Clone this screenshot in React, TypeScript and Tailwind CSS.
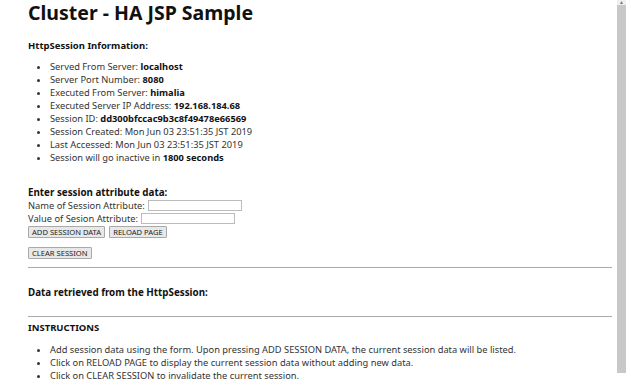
import React from "react";

const font = { fontFamily: '"Noto Sans", "Open Sans", sans-serif' };

function Btn({ children }: { children: React.ReactNode }) {
  return (
    <button className="h-[12px] px-[3px] border border-[#a9a9a9] bg-[#e8e8e8] text-[7.6px] leading-[10px] text-[#222] rounded-[1px]">
      {children}
    </button>
  );
}

export default function App() {
  return (
    <div className="w-[631px] h-[390px] bg-white flex overflow-hidden text-[#111]" style={font}>
      <div className="flex-1 pl-[28px] pr-[5px]">
        <h1 className="text-[19.5px] font-bold leading-[24px] mt-[1px]">Cluster - HA JSP Sample</h1>
        <h3 className="text-[9.5px] font-bold mt-[15px] leading-[12px]">HttpSession Information:</h3>
        <ul className="mt-[8px] text-[9.3px] leading-[13px] text-[#333] list-disc pl-[22px]">
          <li>Served From Server: <b className="text-[#111]">localhost</b></li>
          <li>Server Port Number: <b className="text-[#111]">8080</b></li>
          <li>Executed From Server: <b className="text-[#111]">himalia</b></li>
          <li>Executed Server IP Address: <b className="text-[#111]">192.168.184.68</b></li>
          <li>Session ID: <b className="text-[#111]">dd300bfccac9b3c8f49478e66569</b></li>
          <li>Session Created: Mon Jun 03 23:51:35 JST 2019</li>
          <li>Last Accessed: Mon Jun 03 23:51:35 JST 2019</li>
          <li>Session will go inactive in <b className="text-[#111]">1800 seconds</b></li>
        </ul>
        <div className="mt-[22px] text-[9.3px] leading-[13px] text-[#333]">
          <div className="font-bold text-[#111] text-[9.8px]">Enter session attribute data:</div>
          <div className="flex items-center">
            Name of Session Attribute:
            <span className="inline-block ml-[3px] w-[94px] h-[11px] border border-[#bbb] bg-white" />
          </div>
          <div className="flex items-center">
            Value of Sesion Attribute:
            <span className="inline-block ml-[3px] w-[94px] h-[11px] border border-[#bbb] bg-white" />
          </div>
          <div className="flex gap-[4px] mt-[1px]">
            <Btn>ADD SESSION DATA</Btn>
            <Btn>RELOAD PAGE</Btn>
          </div>
          <div className="mt-[8px]">
            <Btn>CLEAR SESSION</Btn>
          </div>
        </div>
        <hr className="mt-[8px] border-t border-[#aaa]" />
        <h3 className="text-[9.8px] font-bold mt-[19px] leading-[12px]">Data retrieved from the HttpSession:</h3>
        <hr className="mt-[17px] border-t border-[#aaa]" />
        <h3 className="text-[9.5px] font-bold mt-[5px] leading-[12px]">INSTRUCTIONS</h3>
        <ul className="mt-[9px] text-[9.3px] leading-[13px] text-[#333] list-disc pl-[22px]">
          <li>Add session data using the form. Upon pressing ADD SESSION DATA, the current session data will be listed.</li>
          <li>Click on RELOAD PAGE to display the current session data without adding new data.</li>
          <li>Click on CLEAR SESSION to invalidate the current session.</li>
        </ul>
      </div>
      <div className="w-[9px] flex flex-col shrink-0 mr-[5px] bg-[#f0f0f0]">
        <div className="h-[5px] flex items-center justify-center text-[5px] text-[#777] leading-none">▲</div>
        <div className="h-[368px] bg-[#c8c8c8]" />
        <div className="flex-1 bg-white" />
      </div>
    </div>
  );
}
